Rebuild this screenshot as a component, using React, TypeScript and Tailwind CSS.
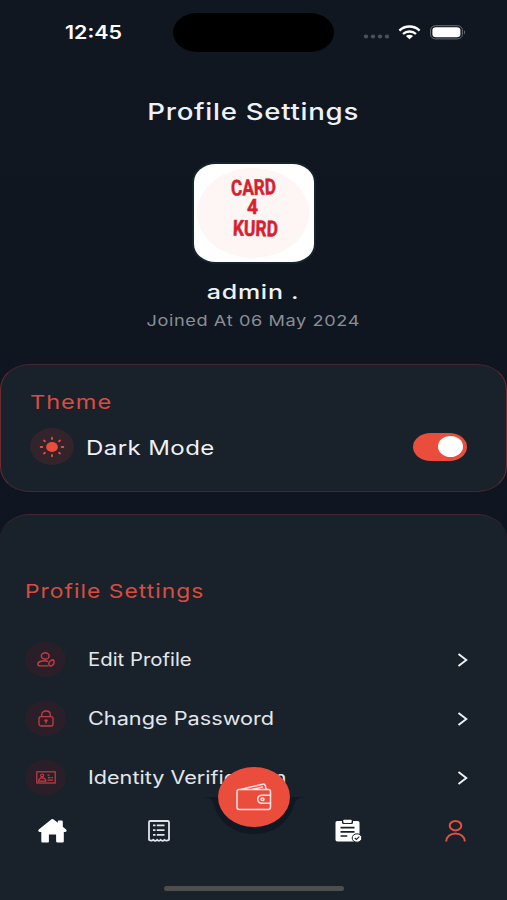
import { useState } from 'react'
import type { ReactNode } from 'react'

function StatusBar() {
    return <div className="flex h-[64px] shrink-0 items-center">
        <div className="w-[173px] pl-[65px] pt-[2px]">
            <span className="inline-block origin-left scale-x-[1.19] text-[18px] font-semibold leading-none text-white">12:45</span>
        </div>
        <div className="h-[39px] w-[161px] rounded-[24px/19.5px] bg-black" />
        <svg className="ml-[29px] mt-[9px]" width="26" height="5" viewBox="0 0 26 5" fill="#4b4f56">
            <ellipse cx="3" cy="2.5" rx="2.2" ry="1.9" />
            <ellipse cx="10" cy="2.5" rx="2.2" ry="1.9" />
            <ellipse cx="17" cy="2.5" rx="2.2" ry="1.9" />
            <ellipse cx="24" cy="2.5" rx="2.2" ry="1.9" />
        </svg>
        <svg className="ml-[9px]" width="23" height="15" viewBox="0 0 23 15" fill="none" stroke="#fff" strokeWidth="2.4">
            <path d="M1.4 5.6C7 .2 16 .2 21.6 5.6" />
            <path d="M5 9C8.6 5.6 14.4 5.6 18 9" />
            <path d="M7.9 11.1C10 9.3 13 9.3 15.1 11.1L11.5 14.2Z" fill="#fff" stroke="none" />
        </svg>
        <svg className="ml-[9px]" width="36" height="15" viewBox="0 0 36 15">
            <rect x=".6" y=".7" width="31.8" height="13.2" rx="5" ry="4.2" fill="none" stroke="#6a6e74" />
            <rect x="2.4" y="2.3" width="28" height="10" rx="3.6" ry="3" fill="#fff" />
            <path d="M34 5.2v4.2c1.4-.6 1.4-3.6 0-4.2z" fill="#6a6e74" />
        </svg>
    </div>
}

function Avatar() {
    return <div className="h-[98px] w-[120px] overflow-hidden rounded-[22px/18px] bg-white shadow-[0_0_0_2px_#15242c]">
        <svg width="120" height="98" viewBox="0 0 120 98" fill="#d81f30" stroke="#d81f30" strokeWidth=".5" fontFamily="'Liberation Sans Narrow', 'Roboto', sans-serif" fontWeight="700">
            <ellipse cx="59" cy="49" rx="56" ry="45" fill="#fdf6f4" stroke="none" />
            <text x="37" y="31" fontSize="22" textLength="45" lengthAdjust="spacingAndGlyphs" transform="rotate(-2 59 24)">CARD</text>
            <text x="53" y="49.5" fontSize="20" textLength="11" lengthAdjust="spacingAndGlyphs">4</text>
            <text x="39" y="72" fontSize="22" textLength="45" lengthAdjust="spacingAndGlyphs" transform="rotate(1.5 61 64)">KURD</text>
        </svg>
    </div>
}

function SunIcon() {
    return <svg width="26" height="22" viewBox="-13 -11 26 22" stroke="#eb4d3d" strokeWidth="1.8" strokeLinecap="round">
        <ellipse rx="5.9" ry="4.9" fill="#eb4d3d" stroke="none" />
        <path d="M0-9.3V-8M0 9.3V8M-11.3 0h1.6M11.3 0H9.7M-8-6.5l.9.7M8-6.5l-.9.7M-8 6.5l.9-.7M8 6.5l-.9-.7" />
    </svg>
}

function UserIcon() {
    return <svg width="18" height="15" viewBox="0 0 18 15" fill="none" stroke="#c53c42" strokeWidth="1.4" strokeLinecap="round" strokeLinejoin="round">
        <ellipse cx="8.2" cy="4" rx="3.9" ry="3.200" />
        <path d="M10.500 9.200C5.800 8 1 9.500.8 12c-.1 1.300 1 1.900 2.400 1.900h7.500" />
        <path d="M16.400 7.800c.9 1.500.9 3.300-.2 4.700-1 1.300-2.500 1.800-3.900 1.200-.8-1.500-.6-3.200.6-4.400 1-.9 2.300-1.400 3.500-1.500z" />
    </svg>
}

function LockIcon() {
    return <svg width="16" height="17" viewBox="0 0 16 17" fill="none" stroke="#c53c42" strokeWidth="1.3" strokeLinejoin="round">
        <rect x="1" y="6.6" width="14" height="9.4" rx="2" />
        <path d="M3.7 6.6V4.8C3.7 2.5 5.6 1 8 1s4.3 1.5 4.3 3.8v1.8" />
        <ellipse cx="8" cy="10.6" rx="1.7" ry="1.4" fill="#c53c42" stroke="none" />
        <path d="M8 10.600v3" />
    </svg>
}

function IdIcon() {
    return <svg width="20" height="13" viewBox="0 0 20 13" fill="none" stroke="#c53c42" strokeWidth="1.200">
        <rect x=".8" y=".8" width="18.400" height="11.200" />
        <ellipse cx="6.200" cy="4.400" rx="1.500" ry="1.400" />
        <path d="M2.500 10.200c.3-2.200 1.800-3.400 3.700-3.400s3.400 1.200 3.700 3.400zM11.500 4.200h2M12 6.600h2.500M15.500 6.600h1.500M11.500 9.200h5.500" />
    </svg>
}

function WalletIcon() {
    return <svg width="36" height="28" viewBox="0 0 36 28" fill="none" stroke="#fbe3df" strokeWidth="1.5" strokeLinejoin="round" strokeLinecap="round">
        <rect x="1" y="6.500" width="33.500" height="20" rx="2.200" />
        <path d="M5.500 6.200L26.500 1.200c1.500-.3 2.400.3 2.700 1.300l1 3.700M17 6.200l9.500-2.200" />
        <path d="M34.500 12.200h-8.200c-2.700 0-4.600 1.700-4.600 4s1.900 4 4.600 4h8.200" />
        <ellipse cx="26.500" cy="16.200" rx="1.500" ry="1.300" />
    </svg>
}

function HomeIcon() {
    return <svg width="29" height="24" viewBox="0 0 29 24" fill="#fff">
        <path d="M12.900.7c.9-.8 2.200-.8 3.100 0l3.800 3.100V2.700c0-.7.5-1.200 1.200-1.200h2.600c.7 0 1.200.5 1.200 1.200v5l3.300 2.900c1 1 .4 2.300-.9 2.300h-1.400v9.300c0 .8-.6 1.300-1.400 1.300h-5.100c-.8 0-1.200-.5-1.200-1.200v-6.700h-7.200v6.700c0 .8-.4 1.200-1.200 1.200H4.600c-.8 0-1.300-.5-1.300-1.300v-9.300H1.700c-1.300 0-1.900-1.300-.9-2.300z" />
    </svg>
}

function ReceiptIcon() {
    return <svg width="22" height="22" viewBox="0 0 22 22" fill="none" stroke="#e2e5e9" strokeWidth="1.800" strokeLinejoin="round">
        <path d="M1 19.800V2.200C1 1.400 1.500 1 2.300 1h17.400c.8 0 1.300.4 1.300 1.200v17.600c-1.600 1.100-3.300 1.100-4.500 0-1.200 1.300-2.800 1.300-3.800 0-1 1.300-2.500 1.300-3.500 0-1 1.300-2.600 1.300-3.800 0C4 20.900 2.500 20.900 1 19.800z" />
        <path d="M5 5.300h2.500M5 10.100h2.500M5 14.900h2.500M8.800 5.300h7.700M8.800 10.100h7.700M8.800 14.900h7.700" />
    </svg>
}

function ClipboardIcon() {
    return <svg width="27" height="24" viewBox="0 0 27 24">
        <rect x=".5" y="2" width="24" height="20.500" rx="1.800" fill="#fff" />
        <rect x="7" y="-.5" width="11" height="5.500" rx="1.500" fill="#19222b" />
        <rect x="8.300" y=".7" width="8.400" height="3.200" rx=".8" fill="#fff" />
        <path d="M5.500 8.600h14M5.500 12.800h14M5.500 17h6.800" stroke="#19222b" strokeWidth="1.700" />
        <ellipse cx="22" cy="19" rx="4.800" ry="4.200" fill="#fff" stroke="#19222b" />
        <path d="M19.800 19l1.600 1.400 2.900-2.700" stroke="#19222b" strokeWidth="1.100" fill="none" />
    </svg>
}

function AccountIcon() {
    return <svg width="21" height="22" viewBox="0 0 21 22" fill="none" stroke="#e34f40" strokeWidth="2">
        <ellipse cx="10.500" cy="5.700" rx="5.800" ry="4.700" />
        <path d="M1.200 21.500c0-4.500 4-8.100 9.300-8.100s9.300 3.600 9.300 8.100" />
    </svg>
}

const items: { label: string, icon: ReactNode, stretch: string }[] = [
    { label: 'Edit Profile', icon: <UserIcon />, stretch: 'scale-x-[1.13]' },
    { label: 'Change Password', icon: <LockIcon />, stretch: 'scale-x-[1.205]' },
    { label: 'Identity Verification', icon: <IdIcon />, stretch: 'scale-x-[1.2]' },
]

export default function App() {
    const [dark, setDark] = useState(true)

    return <div className="relative flex h-[900px] w-[507px] flex-col overflow-hidden bg-[#0e1520] bg-linear-to-b from-[#111720] to-[#0d1420] font-['Inter','Open_Sans',sans-serif] text-[#eef1f5]">
        <StatusBar />

        <div className="flex flex-col items-center">
            <h1 className="mt-[33px] scale-x-[1.2] whitespace-nowrap text-[23px] font-medium leading-[30px] tracking-[0.6px]">Profile Settings</h1>
            <div className="mt-[37px]">
                <Avatar />
            </div>
            <h2 className="mt-[18px] scale-x-[1.25] whitespace-pre text-[20px] font-medium leading-[24px] tracking-[0.6px]">admin .</h2>
            <p className="mt-[7px] scale-x-[1.21] whitespace-nowrap text-[15px] leading-[20px] tracking-[0.5px] text-[#8a8e95]">Joined At 06 May 2024</p>
        </div>

        <section className="mt-[33px] h-[128px] shrink-0 rounded-[30px/25px] border border-x-[#6d2b30] border-y-[#47262f] bg-[#19222b] px-[29px] pt-[26px]">
            <h3 className="w-max origin-left scale-x-[1.24] text-[19px] leading-[24px] tracking-[0.8px] text-[#d94c40]">Theme</h3>
            <div className="mt-[13px] flex h-[37px] items-center">
                <div className="flex h-[37px] w-[44px] items-center justify-center rounded-[50%] bg-[#33242c]">
                    <SunIcon />
                </div>
                <span className="ml-[12px] mt-[2px] origin-left scale-x-[1.2] whitespace-nowrap text-[20px] leading-[24px] tracking-[0.35px]">Dark Mode</span>
                <button onClick={() => setDark(!dark)} className={`ml-auto mr-[10px] flex h-[28px] w-[54px] items-center rounded-[18px/14px] px-[4px] ${dark ? 'justify-end bg-[#eb4d3d]' : 'justify-start bg-gray-600'}`}>
                    <span className="h-[21px] w-[25px] rounded-[50%] bg-white" />
                </button>
            </div>
        </section>

        <section className="mt-[22px] h-[420px] shrink-0 rounded-t-[30px_25px] border-t border-t-[#47262f] bg-[#19222b] pl-[25px] pr-[39px] pt-[64px]">
            <h3 className="w-max origin-left scale-x-[1.2] text-[19px] leading-[26px] tracking-[0.85px] text-[#d94c40]">Profile Settings</h3>
            <ul className="mt-[25px]">
                {
                    items.map((item) => (
                        <li className="flex h-[59px] items-center" key={item.label}>
                            <div className="flex h-[35px] w-[41px] items-center justify-center rounded-[50%] bg-[#2a1f29]">
                                {item.icon}
                            </div>
                            <span className={`ml-[22px] origin-left whitespace-nowrap text-[18px] leading-[24px] text-[#e3e7ec] ${item.stretch}`}>{item.label}</span>
                            <svg className="ml-auto" width="11" height="14" viewBox="0 0 11 14" fill="none" stroke="#f0f2f5" strokeWidth="1.900">
                                <path d="M1.500 1L9.300 7l-7.800 6" />
                            </svg>
                        </li>
                    ))
                }
            </ul>
        </section>

        {/* bottom navigation sits over the list */}
        <nav className="absolute inset-x-0 bottom-0 h-[103px] bg-[#19222b]">
            <svg className="absolute left-[200px] top-0" width="108" height="42" viewBox="0 0 108 42">
                <path d="M0 0C9 0 12 2 14 8c5 17 19 29 40 29s35-12 40-29c2-6 5-8 14-8z" fill="#101923" />
            </svg>
            <div className="flex h-[68px] items-center pl-[38px] pr-[41px]">
                <HomeIcon />
                <div className="ml-[81px]"><ReceiptIcon /></div>
                <div className="ml-auto"><ClipboardIcon /></div>
                <div className="ml-[83px]"><AccountIcon /></div>
            </div>
            <button className="absolute left-[218px] top-[-30px] flex h-[60px] w-[72px] items-center justify-center rounded-[50%] bg-[#eb4d3d]">
                <WalletIcon />
            </button>
            <div className="mx-auto mt-[21px] h-[5px] w-[180px] rounded-full bg-[#4e4e4e]" />
        </nav>
    </div>
}
